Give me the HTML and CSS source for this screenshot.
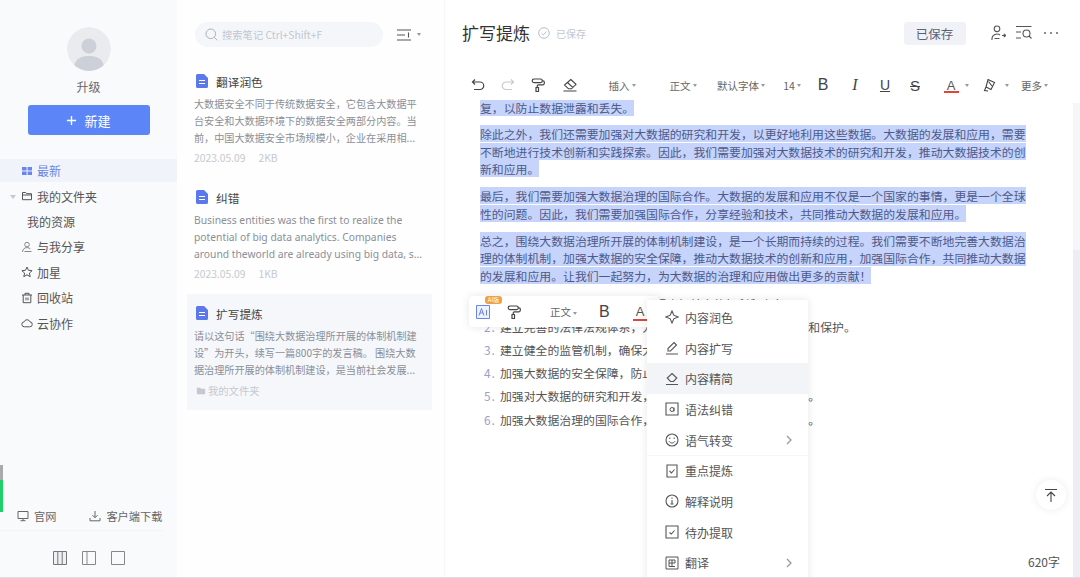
FILE: index.html
```html
<!DOCTYPE html>
<html lang="zh-CN">
<head>
<meta charset="utf-8">
<title>扩写提炼</title>
<link rel="stylesheet" href="styles.css">
</head>
<body>
<div class="app">
  <aside class="sidebar">
    <div class="avatar"><svg viewBox="0 0 44 44" width="44" height="44"><circle cx="22" cy="22" r="22" fill="#e9ebef"/><circle cx="22" cy="19" r="7.5" fill="#ccd0d8"/><path d="M7 39c2-8 8-10 15-10s13 2 15 10a22 22 0 0 1-30 0z" fill="#ccd0d8"/></svg></div>
    <div class="upgrade">升级</div>
    <button class="new-btn"><svg viewBox="0 0 12 12" width="11" height="11"><path d="M6 1v10M1 6h10" stroke="#fff" stroke-width="1.5"/></svg><span>新建</span></button>
    <nav class="nav">
      <div class="nav-row active"><svg class="ni" viewBox="0 0 12 12"><path d="M1 2h4.600v3.400H1zM6.600 2H11v3.400H6.600zM1 6.600h4.600V10H1zM6.600 6.600H11V10H6.600z" fill="#6a86e6"/></svg>最新</div>
      <div class="nav-row"><span class="tree-caret"></span><svg class="ni" viewBox="0 0 12 12"><path d="M1.500 2.500h3.200l1 1.200h4.800v6h-9zM1.500 5h9" fill="none" stroke="#555" stroke-width="1"/></svg>我的文件夹</div>
      <div class="nav-row sub">我的资源</div>
      <div class="nav-row"><svg class="ni" viewBox="0 0 12 12"><circle cx="6" cy="3.600" r="2.300" fill="none" stroke="#888" stroke-width="1"/><path d="M1.500 11c.3-3 2-4.400 4.500-4.400 1.500 0 2.600.5 3.400 1.400M3.500 10.500h7" fill="none" stroke="#888" stroke-width="1"/></svg>与我分享</div>
      <div class="nav-row"><svg class="ni" viewBox="0 0 12 12"><path d="M6 1l1.500 3.300 3.600.4-2.700 2.400.8 3.600L6 8.800l-3.200 1.900.8-3.600L.9 4.700l3.600-.4z" fill="none" stroke="#555" stroke-width="1"/></svg>加星</div>
      <div class="nav-row"><svg class="ni" viewBox="0 0 12 12"><path d="M1 3h10M4 3V1.300h4V3M2.200 3v7.700h7.600V3M5 5.500v2.800M7 5.500v2.800" fill="none" stroke="#555" stroke-width="1"/></svg>回收站</div>
      <div class="nav-row"><svg class="ni" viewBox="0 0 12 12"><path d="M3.500 9.800a2.500 2.500 0 0 1-.3-5 3 3 0 0 1 5.700 0 2.500 2.500 0 0 1-.3 5z" fill="none" stroke="#555" stroke-width="1"/></svg>云协作</div>
    </nav>
    <div class="side-foot">
      <div class="foot-links">
        <span class="foot-link"><svg class="ni" viewBox="0 0 12 12"><path d="M1 1.500h10v7H1zM3.500 10.700h5M6 8.500v2.200" fill="none" stroke="#666" stroke-width="1"/></svg>官网</span>
        <span class="foot-link"><svg class="ni" viewBox="0 0 12 12"><path d="M6 1v6.500M3.500 5.200L6 7.700l2.500-2.500M1 8v2.800h10V8" fill="none" stroke="#666" stroke-width="1"/></svg>客户端下载</span>
      </div>
      <div class="layout-btns">
        <svg class="lb" viewBox="0 0 14 14"><path d="M.5.500h13v13H.500zM4.800.500v13M9.200.500v13" fill="#eef0f4" stroke="#777" stroke-width="1"/></svg>
        <svg class="lb" viewBox="0 0 14 14"><path d="M.5.500h13v13H.500zM5 .5v13" fill="none" stroke="#888" stroke-width="1"/></svg>
        <svg class="lb" viewBox="0 0 14 14"><path d="M.5.500h13v13H.500z" fill="none" stroke="#888" stroke-width="1"/></svg>
      </div>
    </div>
  </aside>

  <section class="notes">
    <div class="search-row">
      <div class="search"><svg class="si" viewBox="0 0 13 13"><circle cx="5.800" cy="5.800" r="4.800" fill="none" stroke="#aab0bd" stroke-width="1"/><path d="M9.300 9.300l3 3" stroke="#aab0bd" stroke-width="1"/></svg>搜索笔记 Ctrl+Shift+F</div>
      <svg class="sort" viewBox="0 0 15 12"><path d="M0 1h14M0 6h8M0 11h14M11.500 3.500v5" fill="none" stroke="#555" stroke-width="1.100"/></svg>
      <span class="caret"></span>
    </div>
    <article class="note">
      <h3><svg class="doc" viewBox="0 0 12 14"><path d="M0 1.500A1.500 1.500 0 0 1 1.500 0H8l4 4v8.500a1.500 1.500 0 0 1-1.500 1.500h-9A1.500 1.500 0 0 1 0 12.500z" fill="#5b79ea"/><path d="M3 6.500h6M3 9.500h6" stroke="#fff" stroke-width="1.200"/></svg>翻译润色</h3>
      <p>大数据安全不同于传统数据安全，它包含大数据平台安全和大数据环境下的数据安全两部分内容。当前，中国大数据安全市场规模小，企业在采用相...</p>
      <div class="meta"><span>2023.05.09</span><span>2KB</span></div>
    </article>
    <article class="note">
      <h3><svg class="doc" viewBox="0 0 12 14"><path d="M0 1.500A1.500 1.500 0 0 1 1.500 0H8l4 4v8.500a1.500 1.500 0 0 1-1.500 1.500h-9A1.500 1.500 0 0 1 0 12.500z" fill="#5b79ea"/><path d="M3 6.500h6M3 9.500h6" stroke="#fff" stroke-width="1.200"/></svg>纠错</h3>
      <p class="en">Business entities was the first to realize the potential of big data analytics. Companies around theworld are already using big data, s...</p>
      <div class="meta"><span>2023.05.09</span><span>1KB</span></div>
    </article>
    <article class="note current">
      <h3><svg class="doc" viewBox="0 0 12 14"><path d="M0 1.500A1.500 1.500 0 0 1 1.500 0H8l4 4v8.500a1.500 1.500 0 0 1-1.500 1.500h-9A1.500 1.500 0 0 1 0 12.500z" fill="#5b79ea"/><path d="M3 6.500h6M3 9.500h6" stroke="#fff" stroke-width="1.200"/></svg>扩写提炼</h3>
      <p>请以这句话“围绕大数据治理所开展的体制机制建设”为开头，续写一篇800字的发言稿。 围绕大数据治理所开展的体制机制建设，是当前社会发展...</p>
      <div class="meta folder"><svg viewBox="0 0 12 12" width="10" height="10"><path d="M1 2h4l1 1.300h5V10H1z" fill="#c4c8d0"/></svg>我的文件夹</div>
    </article>
  </section>

  <main class="editor">
    <header class="doc-head">
      <h1>扩写提炼</h1>
      <svg class="saved-ic" viewBox="0 0 12 12"><circle cx="6" cy="6" r="5.300" fill="none" stroke="#b8bcc6" stroke-width="1"/><path d="M3.500 6.200l1.800 1.700 3.200-3.300" fill="none" stroke="#b8bcc6" stroke-width="1"/></svg>
      <span class="saved">已保存</span>
      <button class="save-btn">已保存</button>
      <svg class="hi" viewBox="0 0 16 16"><circle cx="7" cy="3.800" r="2.800" fill="none" stroke="#555" stroke-width="1.100"/><path d="M2 15c-.5-3.500 2-6 5-6 1.300 0 2.300.4 3 1M4.500 13.500h5M12 10.500h3.500M13.800 8.800l1.800 1.700-1.800 1.700" fill="none" stroke="#555" stroke-width="1.100"/></svg>
      <svg class="hi" viewBox="0 0 16 16"><path d="M0 1.500h15.500M0 7h5M0 13h5" fill="none" stroke="#555" stroke-width="1.100"/><circle cx="10.500" cy="8.500" r="3.500" fill="none" stroke="#555" stroke-width="1.100"/><path d="M13 11l2.500 2.500" stroke="#555" stroke-width="1.100"/></svg>
      <span class="more-dots"><i></i><i></i><i></i></span>
    </header>
    <div class="toolbar">
      <span class="ti w30"><svg class="tg" viewBox="0 0 14 14"><path d="M4 1.500L1.500 4 4 6.500M1.500 4H9a3.700 3.700 0 0 1 0 7.500H3" fill="none" stroke="#444" stroke-width="1.200"/></svg></span>
      <span class="ti w30"><svg class="tg" viewBox="0 0 14 14"><path d="M10 1.500L12.500 4 10 6.500M12.500 4H5a3.700 3.700 0 0 0 0 7.500h6" fill="none" stroke="#c8cad0" stroke-width="1.200"/></svg></span>
      <span class="ti w30"><svg class="tg" viewBox="0 0 14 14"><path d="M3 1h6.500a1.800 1.800 0 0 1 0 3.600H3a1.800 1.800 0 0 1 0-3.600zM11.300 2.800h.7a1.300 1.300 0 0 1 1.300 1.300v1.200A1.500 1.500 0 0 1 11.800 6.800H7.500A1.300 1.300 0 0 0 6.200 8.100V9.500M5 9.500h2.500v4H5z" fill="none" stroke="#444" stroke-width="1.200"/></svg></span>
      <span class="ti w34"><svg class="tg" viewBox="0 0 14 14"><path d="M7.800 1.500L13 6.300 8.500 10.800H5.500L1.500 7zM4.500 4.500L10 9.700M.5 13h13" fill="none" stroke="#444" stroke-width="1.100"/></svg></span>
      <span class="ti w70 lbl">插入<span class="caret"></span></span>
      <span class="ti w52 lbl">正文<span class="caret"></span></span>
      <span class="ti w64 lbl">默认字体<span class="caret"></span></span>
      <span class="ti w38 lbl">14<span class="caret"></span></span>
      <span class="ti w24 fmt">B</span>
      <span class="ti w40 fmt ital">I</span>
      <span class="ti w20 fmt und">U</span>
      <span class="ti w40 fmt strk">S</span>
      <span class="ti w26 color ml3">A</span>
      <span class="ti w6"><span class="caret flat"></span></span>
      <span class="ti w28 ml6"><svg class="tg" viewBox="0 0 14 14"><path d="M5 1.500l6.500 3-3.500 7-5-2.500zM5.500 3.500L9 8M3 9l-1.500 3.500 3.500.5" fill="none" stroke="#444" stroke-width="1.100"/></svg></span>
      <span class="ti w6"><span class="caret flat"></span></span>
      <span class="ti lbl ml11">更多<span class="caret"></span></span>
    </div>
    <div class="body-wrap">
      <div class="content">
        <p><span class="sel">复，以防止数据泄露和丢失。</span></p>
        <p><span class="sel">除此之外，我们还需要加强对大数据的研究和开发，以更好地利用这些数据。大数据的发展和应用，需要<br>不断地进行技术创新和实践探索。因此，我们需要加强对大数据技术的研究和开发，推动大数据技术的创<br>新和应用。</span></p>
        <p><span class="sel">最后，我们需要加强大数据治理的国际合作。大数据的发展和应用不仅是一个国家的事情，更是一个全球<br>性的问题。因此，我们需要加强国际合作，分享经验和技术，共同推动大数据的发展和应用。</span></p>
        <p><span class="sel">总之，围绕大数据治理所开展的体制机制建设，是一个长期而持续的过程。我们需要不断地完善大数据治<br>理的体制机制，加强大数据的安全保障，推动大数据技术的创新和应用，加强国际合作，共同推动大数据<br>的发展和应用。让我们一起努力，为大数据的治理和应用做出更多的贡献！</span></p>
        <ol>
          <li>完善大数据治理的体制机制，明确相关方的权利和义务</li>
          <li>建立完善的法律法规体系，为大数据的治理提供法律的支持和保护。</li>
          <li>建立健全的监管机制，确保大数据的合法合规使用。</li>
          <li>加强大数据的安全保障，防止数据泄露和丢失。</li>
          <li>加强对大数据的研究和开发，推动大数据的技术创新和应用。</li>
          <li>加强大数据治理的国际合作，共同推动大数据的发展和应用。</li>
        </ol>
      </div>
      <div class="scrollbar"><div class="thumb"></div></div>
    </div>

    <div class="float-bar">
      <span class="ai-btn"><em>AI版</em><svg viewBox="0 0 14 14" width="14" height="14"><path d="M.5.500h13v13H.500z" fill="#eef2ff" stroke="#6a86e6" stroke-width="1"/><path d="M3 10.500L5.500 3.500 8 10.500M4 8h3M10.500 5v5.500" fill="none" stroke="#6a86e6" stroke-width="1"/></svg></span>
      <svg class="tg fp" viewBox="0 0 14 14"><path d="M3 1h6.500a1.800 1.800 0 0 1 0 3.600H3a1.800 1.800 0 0 1 0-3.600zM11.300 2.800h.7a1.300 1.300 0 0 1 1.300 1.300v1.200A1.500 1.500 0 0 1 11.800 6.800H7.500A1.300 1.300 0 0 0 6.200 8.100V9.500M5 9.500h2.500v4H5z" fill="none" stroke="#444" stroke-width="1.200"/></svg>
      <span class="lbl fl">正文<span class="caret"></span></span>
      <span class="fmt fb">B</span>
      <span class="color fa">A</span>
    </div>

    <div class="ai-menu">
      <div class="mi"><svg class="mic" viewBox="0 0 14 14"><path d="M7 1l1.800 4.200L13 7 8.800 8.800 7 13 5.200 8.800 1 7l4.200-1.800z" fill="none" stroke="#555" stroke-width="1.100"/></svg>内容润色</div>
      <div class="mi"><svg class="mic" viewBox="0 0 14 14"><path d="M9 1.500l2.500 2.500-6 6H3V7.500zM1 13h12" fill="none" stroke="#555" stroke-width="1.100"/></svg>内容扩写</div>
      <div class="mi hover"><svg class="mic" viewBox="0 0 14 14"><path d="M7 1.500L11.800 6 8.500 9.500h-3L2.200 6zM1 12.500h12" fill="none" stroke="#555" stroke-width="1.100"/></svg>内容精简</div>
      <div class="mi"><svg class="mic" viewBox="0 0 14 14"><path d="M1 1h12v12H1z" fill="none" stroke="#555" stroke-width="1.100"/><circle cx="7" cy="7.500" r="2" fill="none" stroke="#555"/><path d="M9 5.500v4" stroke="#555"/></svg>语法纠错</div>
      <div class="mi sep"><svg class="mic" viewBox="0 0 14 14"><circle cx="7" cy="7" r="6" fill="none" stroke="#555" stroke-width="1.100"/><path d="M4 5.200h1.500M8.500 5.200H10M4 8.300c1.500 2.300 4.500 2.300 6 0" fill="none" stroke="#555" stroke-width="1"/></svg>语气转变<svg class="chev" viewBox="0 0 6 10"><path d="M1 1l4 4-4 4" fill="none" stroke="#999" stroke-width="1.300"/></svg></div>
      <div class="mi"><svg class="mic" viewBox="0 0 14 14"><path d="M2 1h10v12H2zM4.500 7l2 2 3-3.500" fill="none" stroke="#555" stroke-width="1.100"/></svg>重点提炼</div>
      <div class="mi"><svg class="mic" viewBox="0 0 14 14"><circle cx="7" cy="7" r="6" fill="none" stroke="#555" stroke-width="1.100"/><path d="M7 3.500v1.200M7 6v3.500M5.500 10h3" fill="none" stroke="#555" stroke-width="1.100"/></svg>解释说明</div>
      <div class="mi"><svg class="mic" viewBox="0 0 14 14"><path d="M1 1h12v12H1zM4.500 7.500l1.800 1.500 3.200-3.500" fill="none" stroke="#555" stroke-width="1.100"/></svg>待办提取</div>
      <div class="mi"><svg class="mic" viewBox="0 0 14 14"><path d="M1 1h12v12H1zM4 4h6v3H4zM4 7v3.500h6M7 4v6.500" fill="none" stroke="#555" stroke-width="1"/></svg>翻译<svg class="chev" viewBox="0 0 6 10"><path d="M1 1l4 4-4 4" fill="none" stroke="#999" stroke-width="1.300"/></svg></div>
    </div>

    <button class="to-top"><svg viewBox="0 0 14 14" width="14" height="14"><path d="M1 1.500h12M7 4v10M3 8l4-4 4 4" fill="none" stroke="#444" stroke-width="1.100"/></svg></button>
    <div class="count">620字</div>
  </main>

  <div class="edge-tab"></div>
  <div class="bottom-line"></div>
</div>
</body>
</html>
```
FILE: styles.css
```css
* { box-sizing: border-box; }
html, body { margin: 0; height: 100%; overflow: hidden; background: #fff; }
body { font-family: "Noto Sans CJK SC", "Noto Sans", sans-serif; color: #555; font-size: 12px; }
.app { position: relative; display: flex; width: 1080px; height: 578px; overflow: hidden; }
h1, h3, p { margin: 0; font-weight: 400; }
button { font: inherit; border: 0; padding: 0; }

.sidebar { width: 177px; flex: none; background: #f9fafc; display: flex; flex-direction: column; align-items: center; padding-top: 27px; }
.avatar { width: 44px; height: 44px; border-radius: 50%; overflow: hidden; }
.upgrade { margin-top: 7px; line-height: 18px; color: #666; }
.new-btn { margin-top: 9px; width: 122px; height: 30px; background: #5c86f8; color: #fff; border-radius: 3px; display: flex; align-items: center; justify-content: center; gap: 7px; font-size: 13px; }
.nav { width: 100%; margin-top: 24px; }
.nav-row { height: 25.400px; display: flex; align-items: center; gap: 4px; padding-left: 21px; font-size: 12px; color: #555; position: relative; }
.nav-row.active { height: 23px; margin-bottom: 1.500px; color: #6a86e6; background: #f0f3fa; }
.nav-row.sub { padding-left: 27px; }
.ni { width: 12px; height: 12px; flex: none; }
.tree-caret { position: absolute; left: 10px; top: 11px; border: 3px solid transparent; border-top: 4px solid #c4c8d0; border-bottom: 0; }
.side-foot { margin-top: auto; width: 100%; }
.foot-links { display: flex; padding-left: 17px; gap: 33px; height: 28px; align-items: center; color: #666; font-size: 11.200px; margin: 0 14px 20px 0; border-bottom: 1px solid #f3f4f7; padding-bottom: 2px; }
.foot-link { display: flex; align-items: center; gap: 5px; }
.layout-btns { display: flex; justify-content: center; gap: 15px; padding: 0 0 13px 0; }
.lb { width: 14px; height: 14px; }

.notes { width: 268px; flex: none; background: #fefefe; border-right: 1px solid #f7f7f8; padding: 22px 0 0 10px; }
.search-row { display: flex; align-items: center; height: 25px; margin-bottom: 15px; padding-left: 8px; }
.search { width: 188px; height: 25px; border-radius: 13px; background: #f5f6fa; display: flex; align-items: center; gap: 4px; padding-left: 10px; font-size: 10.300px; color: #c2c6d0; }
.si { width: 13px; height: 13px; }
.sort { width: 15px; height: 12px; margin-left: 14px; }
.caret { display: inline-block; margin-left: 2px; border: 2px solid transparent; border-top: 3px solid #999; border-bottom: 0; vertical-align: middle; }
.search-row .caret { margin-left: 5px; }
.caret.flat { margin: 0; }
.note { width: 245px; height: 116px; padding: 12px 7px 0; }
.note.current { background: #f5f7fb; }
.note h3 { display: flex; align-items: center; gap: 8px; height: 14px; font-size: 11.700px; color: #444; padding-left: 2px; }
.doc { width: 12px; height: 14px; flex: none; }
.note p { margin-top: 7px; font-size: 10.150px; line-height: 17px; color: #8b8f98; height: 51px; overflow: hidden; }
.note p.en { font-family: "Noto Sans", sans-serif; font-size: 10.300px; padding-top: 1px; height: 52px; margin-bottom: -1px; }
.meta { display: flex; gap: 13px; margin-top: 3px; font-size: 10.300px; line-height: 17px; color: #c6c9d0; }
.meta.folder { gap: 2px; align-items: center; margin-top: 4px; padding-left: 2px; }

.editor { flex: 1; min-width: 0; position: relative; display: flex; flex-direction: column; background: #fff; }
.doc-head { height: 68px; display: flex; align-items: center; padding: 0 22px 2px 17px; flex: none; }
.doc-head h1 { font-size: 17px; color: #333; line-height: 24px; }
.saved-ic { width: 12px; height: 12px; margin-left: 8px; }
.saved { font-size: 10px; color: #c4c8d0; margin-left: 6px; }
.save-btn { margin-left: auto; width: 62px; height: 23px; border-radius: 3px; background: #f0f2f7; color: #5a6278; font-size: 12.500px; margin-right: 24px; }
.hi { width: 16px; height: 16px; margin-right: 10px; }
.more-dots { display: flex; gap: 3.500px; margin-left: 2px; }
.more-dots i { width: 2.500px; height: 2.500px; border-radius: 50%; background: #666; }

.toolbar { height: 32px; display: flex; align-items: center; padding: 2px 0 0 18px; flex: none; background: #fff; position: relative; z-index: 1; }
.ti { display: flex; align-items: center; justify-content: center; height: 100%; flex: none; }
.w6 { width: 6px; } .w20 { width: 20px; } .w24 { width: 24px; } .w26 { width: 26px; } .w28 { width: 28px; } .w30 { width: 30px; } .w34 { width: 34px; } .w38 { width: 38px; } .w40 { width: 40px; } .w52 { width: 52px; } .w64 { width: 64px; } .w70 { width: 70px; }
.ml3 { margin-left: 3px; } .ml6 { margin-left: 6px; } .ml11 { margin-left: 11px; }
.tg { width: 14px; height: 14px; flex: none; }
.lbl { font-size: 10.500px; color: #666; }
.fmt { font-family: "Liberation Sans", sans-serif; font-size: 16px; color: #444; font-weight: 400; }
.ital { font-family: "Liberation Serif", serif; font-style: italic; font-size: 16px; }
.und { text-decoration: underline; font-size: 14px; }
.strk { text-decoration: line-through; font-size: 15px; }
.color { font-family: "Liberation Sans", sans-serif; font-size: 13px; color: #555; position: relative; }
.color::after { content: ""; position: absolute; left: 50%; margin-left: -7px; bottom: 7px; width: 15px; height: 2px; background: #e0453a; }
.fa { display: block; width: 15px; line-height: 16px; text-align: center; }
.fa::after { bottom: -1px; }

.body-wrap { flex: 1; min-height: 0; display: flex; }
.content { flex: 1; min-width: 0; padding: 0 0 0 35px; font-size: 11.870px; line-height: 17.600px; color: #555; overflow: hidden; }
.content p { margin-bottom: 9.200px; white-space: nowrap; position: relative; top: -1.500px; }
.sel { background: #c6d3fa; color: #4c5a8a; }
.content ol { list-style: none; margin: -3.500px 0 0; padding: 0; counter-reset: n; }
.content li { counter-increment: n; height: 23.200px; padding-left: 20px; line-height: 23.200px; position: relative; white-space: nowrap; }
.content li::before { content: counter(n) "."; position: absolute; left: 4px; color: #9aa3c4; letter-spacing: 1px; }
.scrollbar { width: 7px; flex: none; background: #f5f6f8; margin-top: 3px; }
.thumb { margin-top: 147px; height: 330px; background: #eceef3; }

.float-bar { position: absolute; left: 24px; top: 296px; width: 190px; height: 31px; background: #fff; border-radius: 4px; box-shadow: 0 0 8px rgba(0,0,0,.1); display: flex; align-items: center; z-index: 2; }
.ai-btn { position: relative; margin-left: 7px; display: flex; }
.ai-btn em { position: absolute; left: 9px; top: -9px; width: 17px; height: 8px; border-radius: 3px; background: #f0a040; color: #fff; font-style: normal; font-size: 6px; line-height: 8px; text-align: center; }
.fp { margin-left: 17px; }
.fl { margin-left: 29px; white-space: nowrap; }
.fb { margin-left: 22px; }
.fa { margin-left: 23px; }

.ai-menu { position: absolute; left: 202px; top: 300px; width: 161px; height: 290px; background: #fff; box-shadow: 0 0 8px rgba(0,0,0,.1); padding-top: 2px; z-index: 3; }
.mi { height: 30.700px; display: flex; align-items: center; gap: 6px; padding-left: 18px; font-size: 12px; color: #555; position: relative; }
.mi.hover { background: #f2f4f8; }
.mi.sep::after { content: ""; position: absolute; left: 0; right: 0; bottom: -1px; height: 1px; background: #f6f6f8; }
.mic { width: 14px; height: 14px; flex: none; }
.chev { position: absolute; right: 16px; width: 6px; height: 10px; }

.to-top { position: absolute; left: 591px; top: 480px; width: 30px; height: 30px; border-radius: 50%; background: #fff; box-shadow: 0 0 8px rgba(0,0,0,.08); display: flex; align-items: center; justify-content: center; z-index: 2; }
.count { position: absolute; left: 583px; top: 553px; font-size: 12px; line-height: 18px; color: #555; z-index: 2; }

.edge-tab { position: absolute; left: 0; top: 465px; width: 3px; height: 47px; background: linear-gradient(#aaa 0 15px, #1fcf6a 15px); }
.bottom-line { position: absolute; left: 0; right: 0; bottom: 0; height: 1px; background: #dcdee3; z-index: 4; }
```
